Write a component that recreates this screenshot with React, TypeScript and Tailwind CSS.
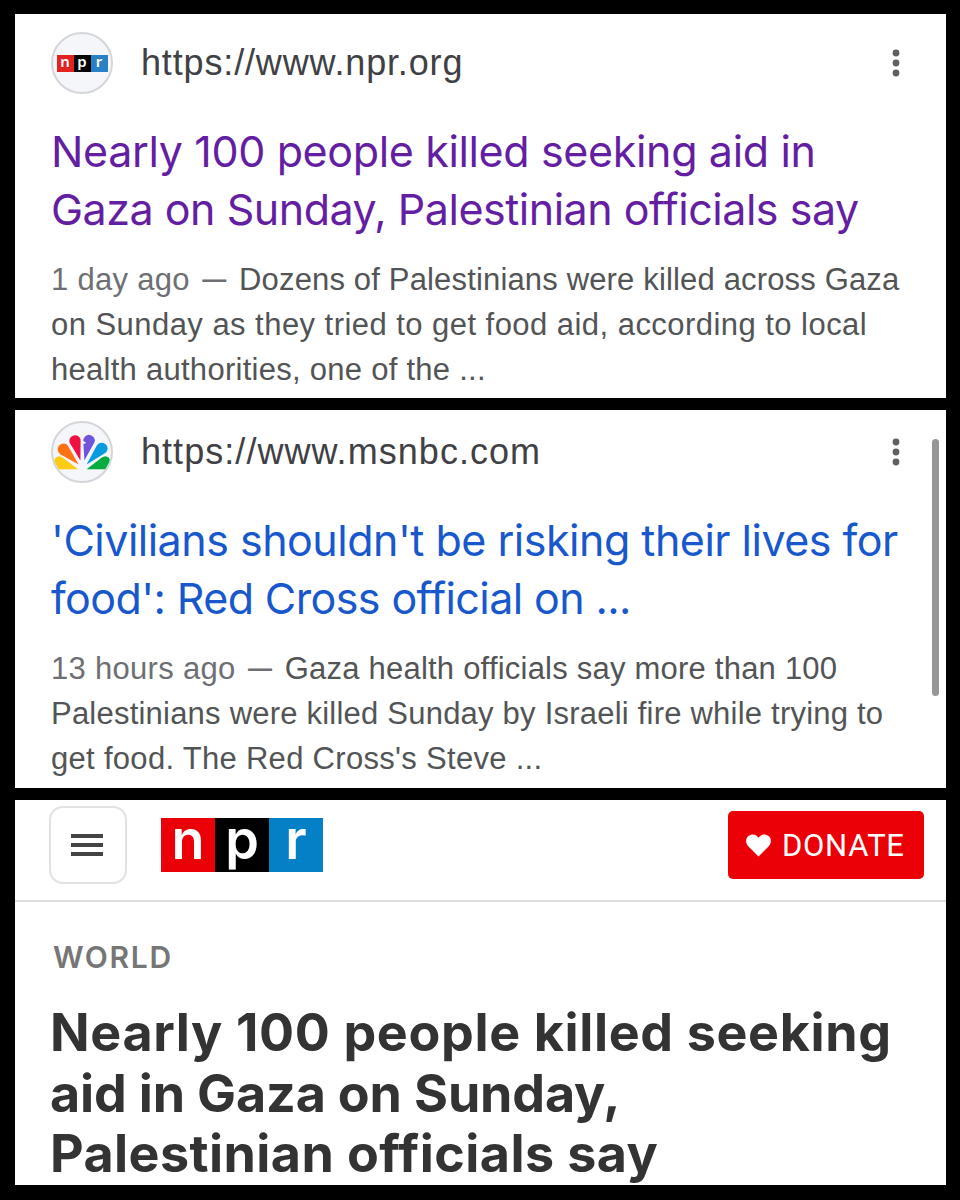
import type { ReactNode } from 'react';

interface Line {
  text: string;
  muted?: string;
  className: string;
}

interface SearchResultProps {
  icon: ReactNode;
  url: ReactNode;
  titleColor: string;
  title: Line[];
  snippet: Line[];
  className: string;
}

function DotsIcon() {
  return (
    <svg viewBox="0 0 8 28" className="h-7 w-2" fill="#5f6062">
      <circle cx="4" cy="4" r="3.4" />
      <circle cx="4" cy="14" r="3.4" />
      <circle cx="4" cy="24" r="3.4" />
    </svg>
  );
}

function PeacockIcon() {
  return (
    <svg viewBox="2 2 58 58" className="size-[58px] shrink-0">
      <path d="M27 48.3 L2 48.3 Q1.5 40 4.5 36.8 Q8 33.8 12 36.8 Z" fill="#fccc12" />
      <path d="M27.6 43.4 L9.2 33.2 A5.8 5.8 0 1 1 17 24.8 Z" fill="#ff7112" />
      <path d="M29.4 39.5 L18.5 21.4 A5.7 5.7 0 1 1 29.6 18.6 Z" fill="#ee1143" />
      <path d="M33.4 39.5 L32.4 23 L35.4 22 L32.4 20 A5.7 5.7 0 1 1 43.6 21 Z" fill="#6e55dc" />
      <path d="M35.6 43.4 L45.8 24.4 A5.8 5.8 0 1 1 53.4 32.6 Z" fill="#069de0" />
      <path d="M35.6 48.3 L50.5 36.8 Q54.5 33.8 58 36.8 Q60.5 41 58.5 45 Q57 48.3 54 48.3 Z" fill="#05ac3f" />
    </svg>
  );
}

function NprFavicon() {
  return (
    <div className="flex h-[17px] w-[51px] shrink-0 font-['Noto_Sans',sans-serif] text-[15px] leading-[13px] font-semibold text-white">
      <span className="w-[17px] bg-[#e2231f] text-center">n</span>
      <span className="w-[17px] bg-[#060606] text-center">p</span>
      <span className="w-[17px] bg-[#2a80c5] text-center">r</span>
    </div>
  );
}

function NprLogo() {
  return (
    <div className="flex h-[54px] w-[162px] text-center font-['Inter',sans-serif] text-[54px] leading-[44px] font-semibold text-white">
      <span className="w-[54px] bg-[#ec0007]">n</span>
      <span className="w-[54px] bg-black">p</span>
      <span className="w-[54px] bg-[#0480c7]">r</span>
    </div>
  );
}

function SearchResult({ icon, url, titleColor, title, snippet, className }: SearchResultProps) {
  return (
    <section className={`w-full bg-white pr-[46px] pl-9 ${className}`}>
      <div className="flex h-[62px] items-center">
        <div className="flex size-[62px] items-center justify-center overflow-hidden rounded-full border-2 border-[#d5d6da] bg-[#f5f6fa]">
          {icon}
        </div>
        <div className="ml-7 flex-1 font-['Liberation_Sans',sans-serif] text-[36px] text-[#3f4145]">{url}</div>
        <DotsIcon />
      </div>

      <h3 className={`mt-7 font-['Inter',sans-serif] text-[43px] leading-[58px] whitespace-nowrap ${titleColor}`}>
        {title.map((line) => (
          <div key={line.text} className={line.className}>{line.text}</div>
        ))}
      </h3>

      <div className="mt-[19px] font-['Liberation_Sans',sans-serif] text-[31px] leading-[45px] whitespace-nowrap text-[#525456]">
        {snippet.map((line) => (
          <div key={line.text} className={`h-[45px] ${line.className}`}>
            {line.muted && (
              <span className="tracking-[0.3px] text-[#6d6f73]">
                {line.muted} <span className="mx-[3.5px] align-[3px] text-[24px] leading-none font-bold">—</span>{' '}
              </span>
            )}
            {line.text}
          </div>
        ))}
      </div>
    </section>
  );
}

export default function App() {
  return (
    <main className="flex h-[1200px] w-[960px] flex-col gap-3 overflow-hidden bg-black pt-[14px] pr-[14px] pl-[15px]">
      <SearchResult
        className="h-[384px] pt-[18px]"
        icon={<NprFavicon />}
        url={<span className="tracking-[0.85px]">https://www.npr.org</span>}
        titleColor="text-[#641ea2]"
        title={[
          { text: 'Nearly 100 people killed seeking aid in', className: 'tracking-[-0.36px]' },
          { text: 'Gaza on Sunday, Palestinian officials say', className: 'tracking-[-0.48px]' },
        ]}
        snippet={[
          { muted: '1 day ago', text: 'Dozens of Palestinians were killed across Gaza', className: 'tracking-[0.16px]' },
          { text: 'on Sunday as they tried to get food aid, according to local', className: 'tracking-[0.455px]' },
          { text: 'health authorities, one of the ...', className: 'tracking-[0.27px]' },
        ]}
      />

      <div className="relative">
        <SearchResult
          className="h-[378px] pt-[11px]"
          icon={<PeacockIcon />}
          url={<span className="tracking-[1.05px]">https://www.msnbc.com</span>}
          titleColor="text-[#1858cc]"
          title={[
            { text: "'Civilians shouldn't be risking their lives for", className: 'tracking-[-0.5px]' },
            { text: "food': Red Cross official on ...", className: 'tracking-[-0.6px]' },
          ]}
          snippet={[
            { muted: '13 hours ago', text: 'Gaza health officials say more than 100', className: 'tracking-[0.22px]' },
            { text: 'Palestinians were killed Sunday by Israeli fire while trying to', className: 'tracking-[0.22px]' },
            { text: "get food. The Red Cross's Steve ...", className: 'tracking-[0.3px]' },
          ]}
        />
        {/* Scrollbar */}
        <div className="absolute top-[29px] right-[7px] h-[257px] w-[7px] rounded-full bg-[#979797]" />
      </div>

      <section className="h-[385px] w-full bg-white">
        <header className="flex h-[102px] items-start border-b-2 border-[#dedede] pr-[22px] pl-[34px]">
          <button
            type="button"
            aria-label="Menu"
            className="mt-[6px] flex size-[78px] flex-col items-center justify-center gap-[5.3px] rounded-[14px] border-2 border-[#e2e2e2] pr-[2px]"
          >
            <span className="h-1 w-8 bg-[#444]" />
            <span className="h-1 w-8 bg-[#444]" />
            <span className="h-1 w-8 bg-[#444]" />
          </button>
          <div className="mt-[18px] ml-[34px]">
            <NprLogo />
          </div>
          <button
            type="button"
            className="mt-[11px] ml-auto flex h-[68px] w-[196px] items-center rounded-[5px] bg-[#ec0007] pl-[18px] font-['Roboto',sans-serif] text-[31px] text-white"
          >
            <svg viewBox="0 0 25 23" className="h-[23px] w-[25px]" fill="currentColor">
              <path d="M12.5 22.5 L2 12 C-.8 8.8 -.3 4.2 2.4 2 C5.8 -.7 10.2 .2 12.5 3.8 C14.8 .2 19.2 -.7 22.6 2 C25.3 4.2 25.8 8.8 23 12 Z" />
            </svg>
            <span className="ml-[11px] pt-[3px] tracking-[0.7px]">DONATE</span>
          </button>
        </header>

        <div className="pt-[35px] pl-[38px] font-['Inter',sans-serif] text-[30px] leading-[40px] font-semibold tracking-[1.7px] text-[#767676]">
          WORLD
        </div>
        <h1 className="mt-[26px] pl-[35px] font-['Inter',sans-serif] text-[52px] leading-[60.6px] font-bold whitespace-nowrap text-[#333]">
          <div className="tracking-[0.64px]">Nearly 100 people killed seeking</div>
          <div className="tracking-[-0.15px]">aid in Gaza on Sunday,</div>
          <div className="tracking-[0.42px]">Palestinian officials say</div>
        </h1>
      </section>
    </main>
  );
}
